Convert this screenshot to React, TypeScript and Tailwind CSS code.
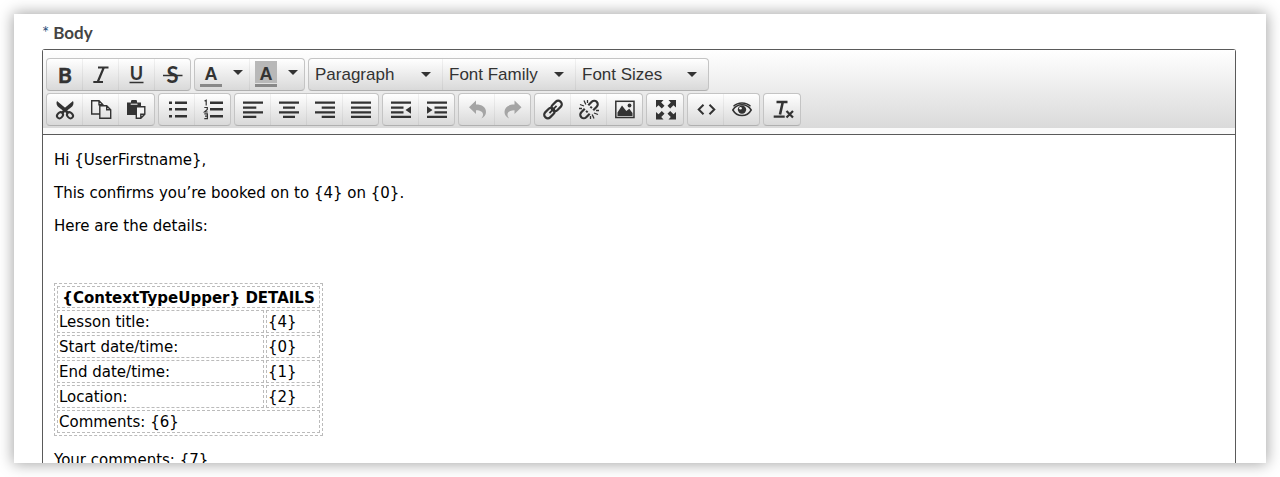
import { useState, type ReactNode } from "react";

interface IconProps {
  children: ReactNode;
}

function Icon({ children }: IconProps) {
  return (
    <svg
      viewBox="0 0 20 20"
      fill="none"
      stroke="currentColor"
      className="size-5 shrink-0 overflow-visible"
      aria-hidden="true"
    >
      {children}
    </svg>
  );
}

interface Tool {
  label: string;
  icon: ReactNode;
  disabled?: boolean;
}

const UNDO_PATH = "M2 7.3 9 .6v4c6 0 10 2.600 10 7.400 0 2.800-1.700 5-4.600 6.600 1.300-1.700 1.600-2.700 1.600-4 0-2.700-2.500-4.300-7-4.300V14z";

const LETTER = "fill-current stroke-none font-[Lato,sans-serif] font-bold";

const FORMAT_TOOLS: Tool[] = [
  {
    label: "Bold",
    icon: (
      <text x="10" y="17.500" textAnchor="middle" fontSize="21" strokeWidth=".5" className="fill-current stroke-current font-[Lato,sans-serif] font-bold">
        B
      </text>
    ),
  },
  {
    label: "Italic",
    icon: <path d="M7 2.500h10.500M2.300 17h9.700M12.800 2.500 6.700 17" strokeWidth="2.200" />,
  },
  {
    label: "Underline",
    icon: (
      <>
        <text x="9.500" y="14.500" textAnchor="middle" fontSize="18" className={LETTER}>
          U
        </text>
        <path d="M2.500 17.500h14" strokeWidth="1.500" />
      </>
    ),
  },
  {
    label: "Strikethrough",
    icon: (
      <>
        <text x="9.500" y="17.500" textAnchor="middle" fontSize="22" className={LETTER}>
          S
        </text>
        <path d="M0 10.500h19.500" strokeWidth="1.300" />
      </>
    ),
  },
];

const TOOL_GROUPS: Tool[][] = [
  [
    {
      label: "Cut",
      icon: (
        <>
          <path d="M2 1C.8 3.600 1.800 5.800 4 7.500l6.200 4.800 2.300-2.600z" fill="currentColor" stroke="none" />
          <path d="M18 1c1.200 2.600.2 4.800-2 6.500l-6.200 4.800-2.300-2.600z" fill="currentColor" stroke="none" />
          <path d="m11 9-4 4M9 9l4 4" strokeWidth="2.500" />
          <ellipse cx="5" cy="15.300" rx="3.300" ry="2.600" transform="rotate(-45 5 15.300)" strokeWidth="2" />
          <ellipse cx="15" cy="15.300" rx="3.300" ry="2.600" transform="rotate(45 15 15.300)" strokeWidth="2" />
        </>
      ),
    },
    {
      label: "Copy",
      icon: (
        <path
          d="M8.500 14H.7V.8h7.300l4 4v1M8 .8v4h4M8.800 5.800h6.900l4 4v8.500H8.800zM15.700 5.800v4h4"
          strokeWidth="1.400"
        />
      ),
    },
    {
      label: "Paste",
      icon: (
        <>
          <path d="M0 2.500h4V1.200C4 .2 5 0 5.500 0h3C9.500 0 10 .5 10 1.200v1.300h4V6H9v9H0z" fill="currentColor" stroke="none" />
          <path d="M3.700 4.200h6.800" stroke="#fff" strokeWidth="1" />
          <path d="M9.300 6.700h8.500v7.500l-4 4H9.300zM17.800 14.200h-4v4" fill="#f4f4f4" strokeWidth="1.400" />
        </>
      ),
    },
  ],
  [
    {
      label: "Bullet list",
      icon: <path d="M2 2.700h3M2 9.300h3M2 16.200h3M8 2.700h12M8 9.300h12M8 16.200h12" strokeWidth="2.500" />,
    },
    {
      label: "Numbered list",
      icon: (
        <>
          <path d="M7 2.700h13M7 9.300h13M7 16.200h13" strokeWidth="2.500" />
          <path
            d="M1.500 1 3.200.2V5.600M1.300 7.500h3v2L1.500 12h3.200M1.300 13.800h3.100v4.900H1.300M2 16.200h2.400"
            strokeWidth="1.200"
          />
        </>
      ),
    },
  ],
  [
    {
      label: "Align left",
      icon: <path d="M0 2.700h20M0 7.600h13.300M0 12.300h20M0 16.900h13.300" strokeWidth="2.300" />,
    },
    {
      label: "Align center",
      icon: <path d="M0 2.700h20M4 7.600h12M0 12.300h20M4 16.900h12" strokeWidth="2.300" />,
    },
    {
      label: "Align right",
      icon: <path d="M0 2.700h20M6.700 7.600H20M0 12.300h20M6.700 16.900H20" strokeWidth="2.300" />,
    },
    {
      label: "Justify",
      icon: <path d="M0 2.700h20M0 7.600h20M0 12.300h20M0 16.900h20" strokeWidth="2.300" />,
    },
  ],
  [
    {
      label: "Decrease indent",
      icon: (
        <>
          <path d="M0 2.700h20M0 7.600h12.500M0 12.300h12.500M0 16.900h20" strokeWidth="2.300" />
          <path d="M14.500 10 20 6.200v7.600z" fill="currentColor" stroke="none" />
        </>
      ),
    },
    {
      label: "Increase indent",
      icon: (
        <>
          <path d="M0 2.700h20M7.500 7.600H20M7.500 12.300H20M0 16.900h20" strokeWidth="2.300" />
          <path d="M5.500 10 0 6.200v7.600z" fill="currentColor" stroke="none" />
        </>
      ),
    },
  ],
  [
    {
      label: "Undo",
      disabled: true,
      icon: <path d={UNDO_PATH} fill="currentColor" stroke="none" />,
    },
    {
      label: "Redo",
      disabled: true,
      icon: <path d={UNDO_PATH} fill="currentColor" stroke="none" transform="translate(20.500 0) scale(-1 1)" />,
    },
  ],
  [
    {
      label: "Insert link",
      icon: (
        <g transform="rotate(-45 10 9.500)" strokeWidth="2.200">
          <rect x="-.8" y="6" width="11.500" height="7" rx="3.200" />
          <rect x="9.300" y="6" width="11.500" height="7" rx="3.200" />
          <path d="M5 9.500h10" strokeWidth="1.800" />
        </g>
      ),
    },
    {
      label: "Remove link",
      icon: (
        <>
          <g transform="rotate(-45 10 9.500)" strokeWidth="2.200">
            <path d="M7.500 6H2.600a3.300 3.300 0 0 0 0 7h4.900M12.500 6h4.900a3.300 3.300 0 0 1 0 7h-4.900M6 9.500h2M12 9.500h2" />
          </g>
          <path d="M1 4.500 5 6M5 .5 6.800 4.500M19 14.500l-4-1.500M15 18.500l-1.800-4M8.500 0v3M11.500 19v-3M0 8.500h3M20 10.500h-3" strokeWidth="1.300" />
        </>
      ),
    },
    {
      label: "Insert image",
      icon: (
        <>
          <rect x=".8" y="1.300" width="18.200" height="16.200" strokeWidth="1.500" />
          <circle cx="14.500" cy="5.500" r="1.900" fill="currentColor" stroke="none" />
          <path d="M2.500 16v-3.500L7 5.500l4.300 5.600 3-2.300 3.200 4.200v3z" fill="currentColor" stroke="none" />
        </>
      ),
    },
  ],
  [
    {
      label: "Fullscreen",
      icon: (
        <>
          <path d="M0 0h7.500L5.200 2.500l3.300 3.300-2.700 2.700-3.300-3.300L0 7.500zM20 0v7.500l-2.500-2.300-3.300 3.300-2.700-2.700 3.300-3.300L12.500 0z" fill="currentColor" stroke="none" />
          <path d="M0 19.500V12l2.500 2.300 3.300-3.300 2.700 2.700-3.300 3.300 2.300 2.500zM20 19.500h-7.500l2.300-2.500-3.300-3.300 2.700-2.700 3.300 3.300L20 12z" fill="currentColor" stroke="none" />
        </>
      ),
    },
  ],
  [
    {
      label: "Source code",
      icon: <path d="M7.500 4.700 2.700 9.500l4.800 4.800M13.500 4.700l4.800 4.800-4.800 4.800" strokeWidth="2" />,
    },
    {
      label: "Preview",
      icon: (
        <>
          <path d="M.8 10C3 6.500 6.200 4.800 10 4.800s7 1.700 9.200 5.200C17 13.800 13.800 15.600 10 15.600S3 13.800.8 10z" strokeWidth="1.500" />
          <path d="M1.500 6.300C6 1.800 14 1.800 18.500 6.300" strokeWidth="1.400" />
          <circle cx="10" cy="9.600" r="4.200" fill="currentColor" stroke="none" />
          <circle cx="8.500" cy="8.300" r="1.300" fill="#f4f4f4" stroke="none" />
        </>
      ),
    },
  ],
  [
    {
      label: "Clear formatting",
      icon: (
        <>
          <path d="M3.500 2h11M9.800 2 7 14.500" strokeWidth="2.600" />
          <path d="M.7 16.700h11" strokeWidth="2.200" />
          <path d="m13.500 11 6.500 6.500M20 11l-6.500 6.500" strokeWidth="2.200" />
        </>
      ),
    },
  ],
];

const DROPDOWNS = [
  { label: "Block format", options: ["Paragraph", "Heading 1", "Heading 2"] },
  { label: "Font family", options: ["Font Family", "Arial", "Verdana"] },
  { label: "Font size", options: ["Font Sizes", "10pt", "12pt"] },
];

const DETAILS = [
  ["Lesson title:", "{4}"],
  ["Start date/time:", "{0}"],
  ["End date/time:", "{1}"],
  ["Location:", "{2}"],
];

function ToolGroup({ children }: { children: ReactNode }) {
  return (
    <div className="flex h-[33px] shrink-0 overflow-hidden rounded border border-[#c4c4c4] border-b-[#b0b0b0] bg-linear-to-b from-white to-[#d9d9d9]">
      {children}
    </div>
  );
}

function ToolButton({ tool }: { tool: Tool }) {
  return (
    <button
      type="button"
      disabled={tool.disabled}
      aria-label={tool.label}
      title={tool.label}
      className="flex w-9 justify-end border-l border-black/5 pt-[6px] pr-[7px] text-[#333] first:w-[35px] first:border-l-0 only:w-9 disabled:text-[#a5a5a5]"
    >
      <Icon>{tool.icon}</Icon>
    </button>
  );
}

function Caret() {
  return (
    <svg viewBox="0 0 10 5" className="h-[5px] w-[10px] fill-[#333]" aria-hidden="true">
      <path d="M0 0h10L5 5z" />
    </svg>
  );
}

function ColorButton({ label, filled }: { label: string; filled?: boolean }) {
  return (
    <div className="flex w-[54px] border-black/5 not-first:w-[55px] not-first:border-l">
      <button type="button" aria-label={label} className="flex flex-1 flex-col items-center gap-px pt-0.5">
        <span
          className={`h-[22px] w-[22px] text-center font-['Liberation_Sans'] text-lg leading-[27px] font-bold text-[#333] ${
            filled ? "bg-[#b8b8b8]" : ""
          }`}
        >
          A
        </span>
        <span className="h-[3px] w-[22px] bg-[#888]" />
      </button>
      <button type="button" aria-label={`${label} options`} className="flex w-[22px] justify-center pt-[11px]">
        <Caret />
      </button>
    </div>
  );
}

function Dropdown({ label, options }: { label: string; options: string[] }) {
  const [value, setValue] = useState(options[0]);

  return (
    <div className="relative w-[133px] border-black/5 not-first:border-l">
      <select
        aria-label={label}
        value={value}
        onChange={(event) => setValue(event.target.value)}
        className="h-full w-full appearance-none bg-transparent pl-[6px] font-['Liberation_Sans'] text-[17px] text-[#333]"
      >
        {options.map((option) => (
          <option key={option}>{option}</option>
        ))}
      </select>
      <span className="pointer-events-none absolute top-[13px] right-[11px]">
        <Caret />
      </span>
    </div>
  );
}

export default function App() {
  return (
    <div className="h-screen bg-white p-[14px]">
      <main className="flex h-full flex-col overflow-hidden bg-white pr-[30px] pl-7 shadow-[0_0_14px_1px_rgba(0,0,0,0.36)]">
        <h1 id="body-label" className="flex h-[35px] shrink-0 gap-1 pt-2 font-[Lato] text-[17px] leading-[22px] font-bold text-[#444]">
          <span className="text-[17px] leading-[22px] font-normal text-[#1f4e79]">*</span>
          Body
        </h1>

        <section aria-labelledby="body-label" className="flex-1 rounded-t-[3px] border border-b-0 border-[#5a5a5a]">
          <div role="toolbar" aria-label="Formatting" className="border-b border-[#5a5a5a] bg-[#fafafa] pb-[6px]">
            <div className="flex flex-col gap-0.5 bg-linear-to-b from-white to-[#dadada] pt-2 pr-1 pb-0.5 pl-[3px]">
              <div className="flex gap-[3px]">
                <ToolGroup>
                  {FORMAT_TOOLS.map((tool) => (
                    <ToolButton key={tool.label} tool={tool} />
                  ))}
                </ToolGroup>
                <ToolGroup>
                  <ColorButton label="Text color" />
                  <ColorButton label="Background color" filled />
                </ToolGroup>
                <ToolGroup>
                  {DROPDOWNS.map((dropdown) => (
                    <Dropdown key={dropdown.label} {...dropdown} />
                  ))}
                </ToolGroup>
              </div>
              <div className="flex gap-[3px]">
                {TOOL_GROUPS.map((group) => (
                  <ToolGroup key={group[0].label}>
                    {group.map((tool) => (
                      <ToolButton key={tool.label} tool={tool} />
                    ))}
                  </ToolGroup>
                ))}
              </div>
            </div>
          </div>

          <div className="flex flex-col gap-[15px] px-[11px] pt-4 font-[Verdana,'DejaVu_Sans',sans-serif] text-[15px] leading-[18px] text-black">
            <p>Hi {"{UserFirstname}"},</p>
            <p>This confirms you’re booked on to {"{4}"} on {"{0}"}.</p>
            <p>Here are the details:</p>
            <p>&nbsp;</p>
            <table className="w-[269px] border-separate border-spacing-[2px] self-start border border-dashed border-[#bbb]">
              <thead>
                <tr>
                  <th colSpan={2} className="border border-dashed border-[#bbb] px-px pt-0.5 text-center whitespace-nowrap">
                    {"{ContextTypeUpper}"} DETAILS
                  </th>
                </tr>
              </thead>
              <tbody className="leading-[19px]">
                {DETAILS.map(([name, value]) => (
                  <tr key={name}>
                    <td className="w-[207px] border border-dashed border-[#bbb] px-px pt-0.5">{name}</td>
                    <td className="border border-dashed border-[#bbb] px-px pt-0.5">{value}</td>
                  </tr>
                ))}
                <tr>
                  <td colSpan={2} className="border border-dashed border-[#bbb] px-px pt-0.5">
                    Comments: {"{6}"}
                  </td>
                </tr>
              </tbody>
            </table>
            <p>Your comments: {"{7}"}</p>
          </div>
        </section>
      </main>
    </div>
  );
}
